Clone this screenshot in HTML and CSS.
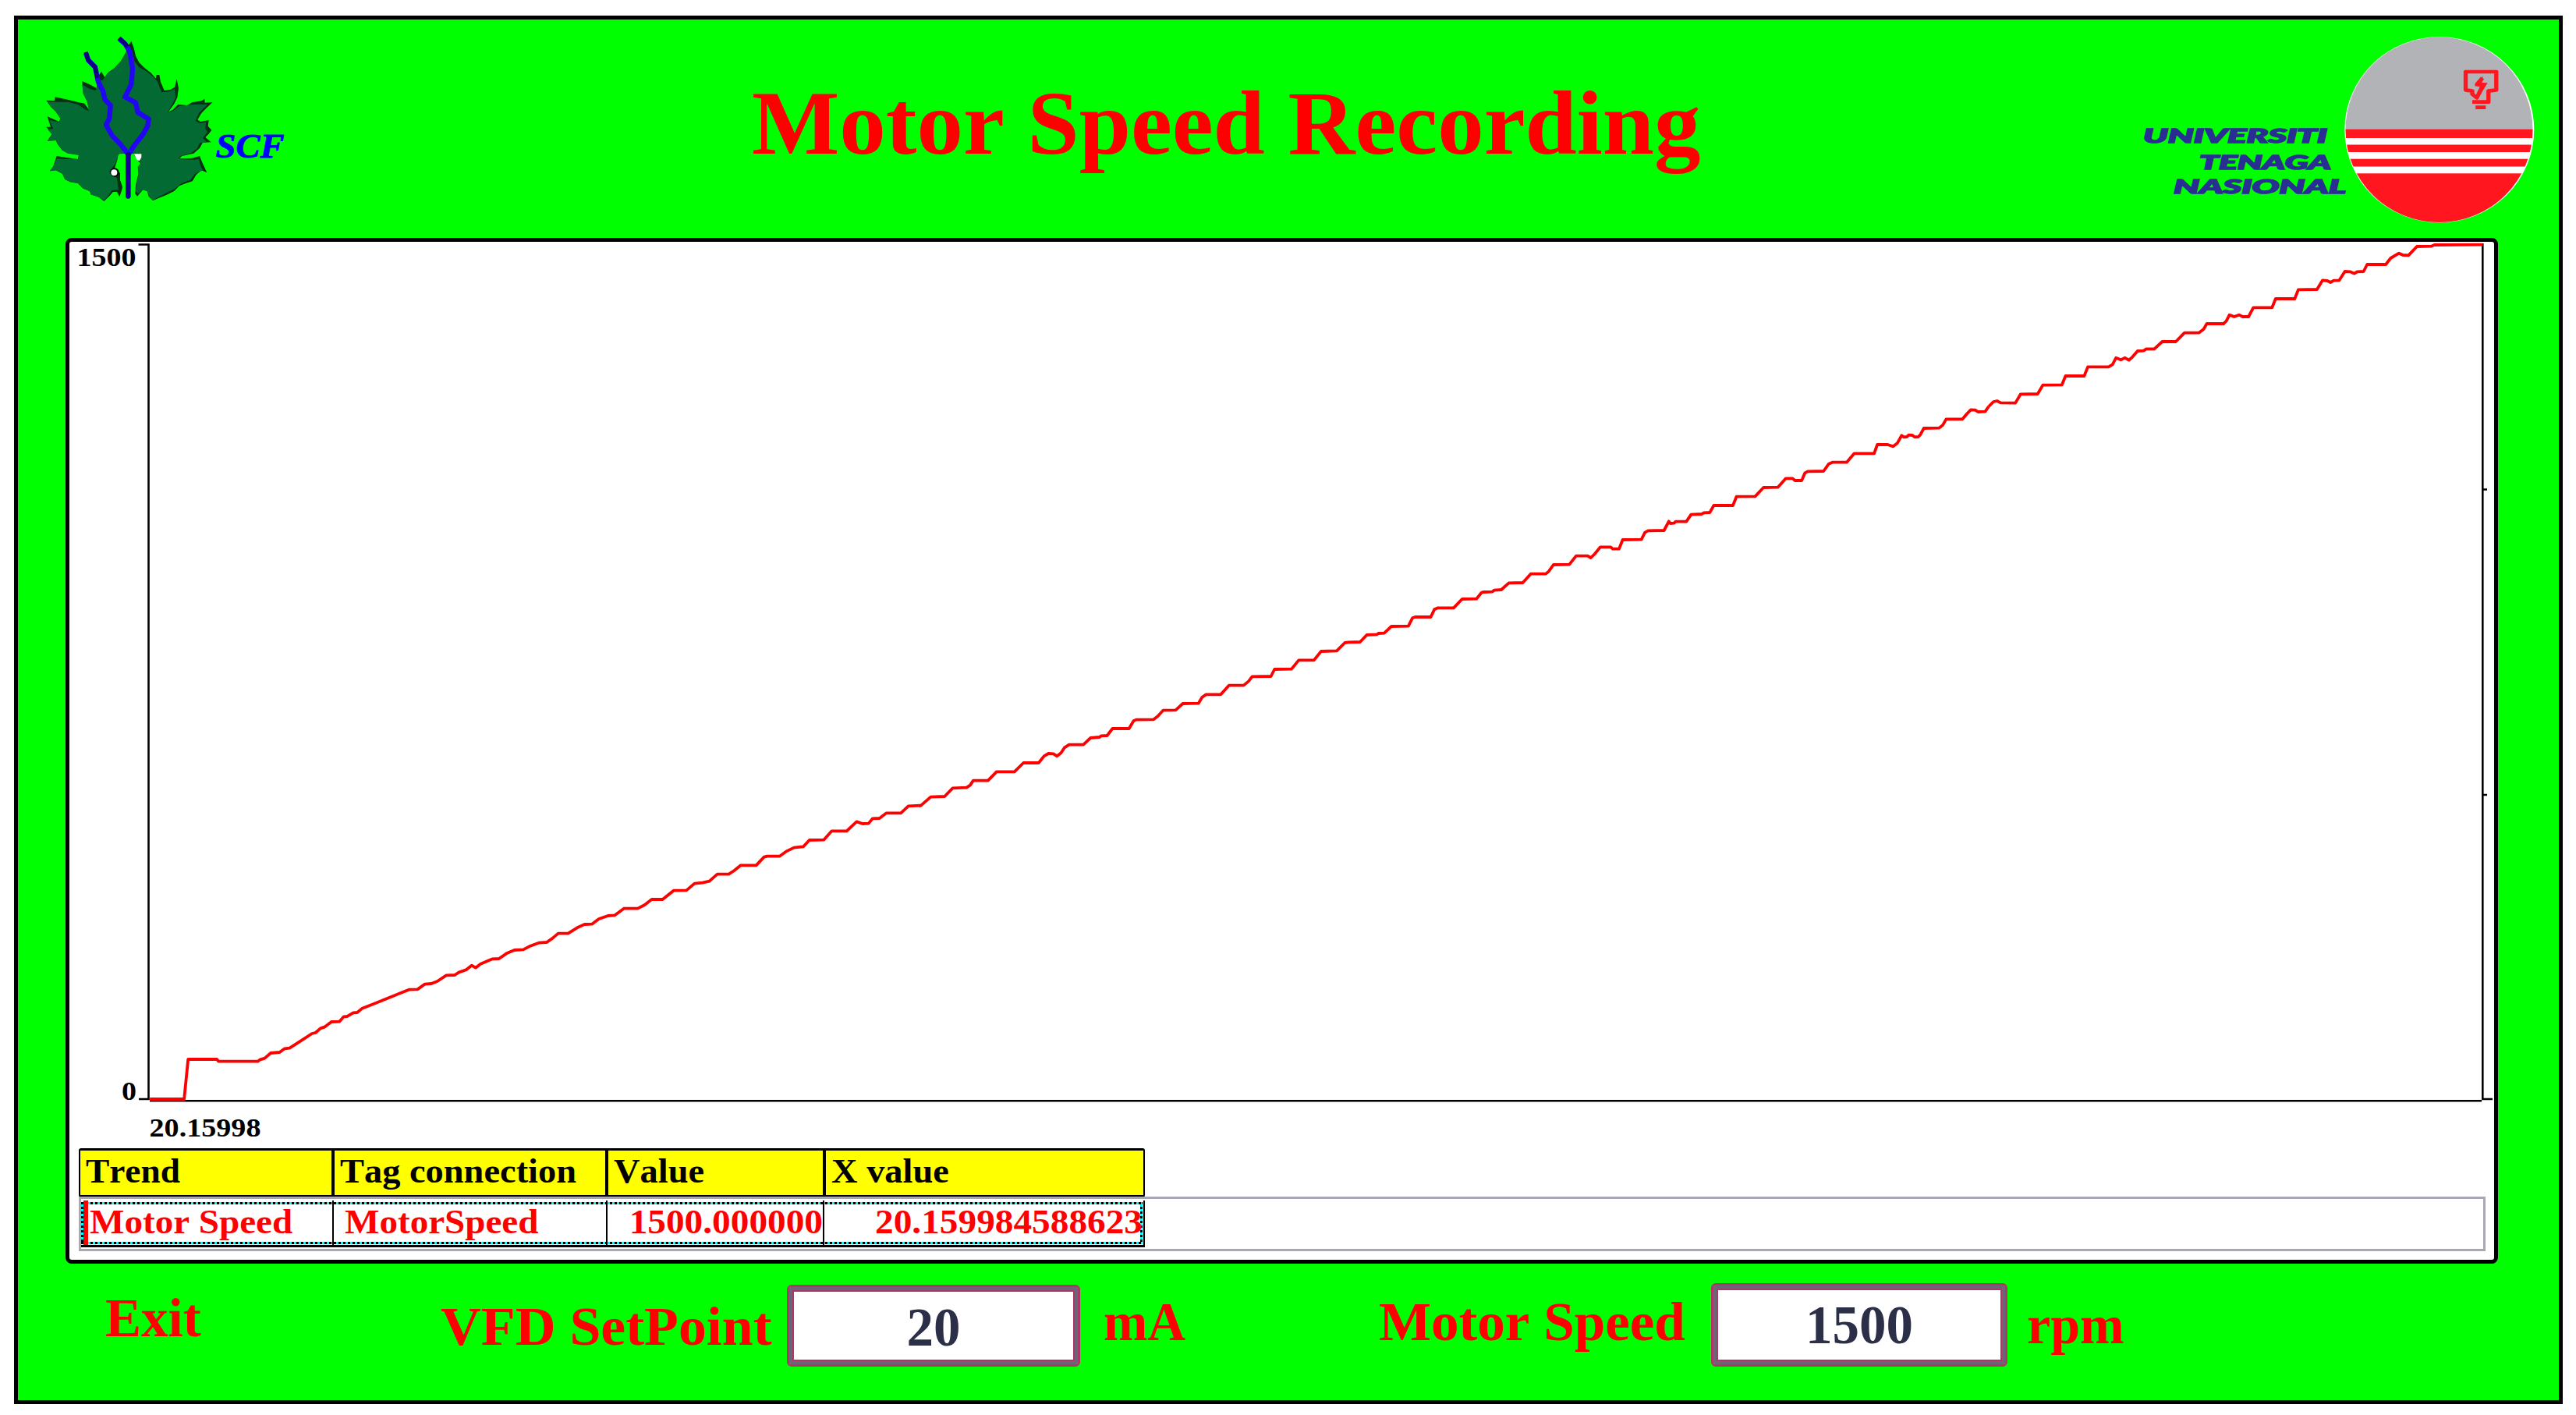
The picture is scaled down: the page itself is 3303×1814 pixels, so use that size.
FILE: index.html
```html
<!DOCTYPE html>
<html lang="en">
<head>
<meta charset="utf-8">
<title>Motor Speed Recording</title>
<link rel="stylesheet" href="styles.css">
</head>
<body>
<main class="screen">
  <header class="header">
    <svg class="logo-scf" viewBox="23 25 344 280" role="img" aria-label="SCF">
      <g transform="scale(.33333)">
        <path id="leaf-shadow" class="leaf-shadow" d="M505 158L515 185 522 215 535 240 555 260 580 280 600 302 602 288 613 288 618 315 632 348 655 345 672 335 680 304 687 340 682 375 670 400 648 430 665 422 685 402 720 405 740 393 775 388 787 380 788 395 818 393 795 415 775 435 760 460 770 468 803 462 800 485 814 500 803 515 790 528 812 547 780 548 768 570 745 590 700 600 690 610 740 608 768 600 778 625 796 664 775 655 755 672 740 697 715 705 690 715 670 735 640 750 610 762 588 772 572 755 566 735 550 730 528 755 520 745 522 710 532 670 530 640 540 630 520 602 505 590 470 592 455 595 450 620 440 650 462 665 462 690 472 720 460 757 450 738 435 738 420 755 400 774 380 758 350 748 345 735 320 725 300 705 270 700 250 690 240 668 215 655 192 658 205 640 218 600 250 605 300 612 303 595 260 588 240 578 222 555 215 540 182 542 200 515 178 488 195 488 182 448 228 468 232 455 215 430 195 410 178 386 210 387 212 373 250 381 280 388 300 393 325 398 345 425 335 390 320 360 316 312 345 325 372 340 380 290 390 275 403 298 415 280 440 262 465 235 485 200 490 180Z"/>
        <path class="leaf" d="M492 190L510 200 516 235 535 258 560 272 585 292 605 312 622 355 655 352 672 342 676 375 660 405 645 432 668 425 690 408 745 402 798 402 765 435 752 465 770 474 792 470 790 495 798 508 780 530 795 546 768 550 758 572 735 588 690 602 688 612 745 614 765 612 772 640 780 655 750 668 732 692 700 704 672 726 640 742 606 760 588 770 574 755 566 735 550 730 530 745 522 735 524 705 534 670 532 640 542 628 525 600 500 590 456 592 444 630 420 660 450 685 456 730 430 732 415 755 400 770 380 758 350 748 345 735 320 725 300 705 270 700 250 690 240 668 215 655 192 658 205 640 220 610 250 612 303 612 303 597 260 590 240 578 222 555 215 540 184 541 200 518 184 498 205 495 190 462 228 470 232 455 215 430 195 410 182 392 215 392 260 392 300 402 330 422 342 427 335 390 320 360 316 325 345 342 368 348 378 310 395 308 415 280 440 262 465 235 485 200Z"/>
        <path class="leaf-gap" d="M458 592L482 592 482 757 473 757 470 715 462 690 466 668 453 630ZM502 592L515 592 526 615 540 628 527 645 531 670 520 710 518 757 502 757Z"/>
        <path class="vein vein-thick" d="M330 203L340 232 366 258 378 315 396 350 404 384 425 405 421 455 408 480 430 520 462 553 494 594 520 555 548 520 568 485 572 458 530 432 522 395 481 373 505 325 510 265 500 200 482 170 458 148"/>
        <path class="vein vein-tip" d="M330 200L340 232 366 258 374 300M458 146L480 166 490 180"/>
        <path class="vein vein-stem" d="M493 594V754"/>
        <circle cx="441" cy="663" r="17" fill="#000"/>
        <circle cx="439" cy="664" r="12" fill="#fff"/>
        <path d="M516 592H544V605L536 619 526 614Z" fill="#fff"/>
      </g>
      <text class="scf-text" x="276.5" y="201.5" textLength="88" lengthAdjust="spacingAndGlyphs">SCF</text>
    </svg>

    <h1 class="title">Motor Speed Recording</h1>

    <svg class="logo-uni" viewBox="2740 25 541 280" role="img" aria-label="Universiti Tenaga Nasional">
      <defs>
        <clipPath id="disc"><ellipse cx="3127.5" cy="166.3" rx="120" ry="118.7"/></clipPath>
      </defs>
      <ellipse cx="3127.8" cy="166.3" rx="121.5" ry="119" fill="#fff"/>
      <g clip-path="url(#disc)">
        <rect x="3000" y="40" width="260" height="125.5" fill="#b2b3b7"/>
        <g fill="#ff161f">
          <rect x="3000" y="165.5" width="260" height="11.5"/>
          <rect x="3000" y="185.5" width="260" height="9.5"/>
          <rect x="3000" y="203.7" width="260" height="9.8"/>
          <rect x="3000" y="222.3" width="260" height="70"/>
        </g>
      </g>
      <g transform="translate(2700 0) scale(.38462 .33333)">
        <path class="bulb" d="M1222 392H1276V350L1302 346V276H1200V346L1222 350V362L1237 376 1258 326 1238 324 1256 300M1233 413H1267"/>
        <path fill="#ff161f" d="M1258 293L1229 330 1248 334 1236 372 1244 374 1273 319 1254 318Z"/>
      </g>
      <g class="uni-text">
        <text x="2748" y="183" textLength="236" lengthAdjust="spacingAndGlyphs">UNIVERSITI</text>
        <text x="2820" y="217" textLength="169" lengthAdjust="spacingAndGlyphs">TENAGA</text>
        <text x="2787" y="248.3" textLength="221" lengthAdjust="spacingAndGlyphs">NASIONAL</text>
      </g>
    </svg>
  </header>

  <section class="panel">
    <svg class="chart" viewBox="89 310 3109 1162">
      <path class="axis" d="M177.5 313.5H190.5V1409H178M192 1411.2H3182M3183.3 312V1409H3196M3183.5 627.5H3189M3183.5 1019H3189"/>
      <g class="trend">
        <polyline transform="translate(180 900) scale(.63776 .33333)" points="19,1527 88,1527 96,1374 154,1374 157,1382 236,1382 240,1376 250,1370 262,1350 280,1347 290,1333 300,1331 325,1300 345,1275 352,1272 362,1255 370,1250 384,1230 400,1229 409,1210 416,1209 428,1195 436,1194 446,1178 470,1160 500,1137 540,1106 557,1105 572,1085 585,1083 597,1074 615,1051 632,1050 640,1040 655,1030 666,1013 674,1022 684,1007 708,988 721,987 736,967 752,954 770,952 784,938 801,926 817,924 829,908 840,890 860,890 880,866 893,855 908,854 922,834 940,822 954,820 972,794 1000,794 1014,780 1028,759 1050,759 1072,725 1098,724 1114,698 1130,695 1144,689 1160,662 1183,662 1194,648 1207,628 1238,628 1254,596 1260,593 1285,593 1298,575 1314,560 1333,556 1345,531 1374,530 1390,496 1420,496 1440,460 1452,468 1464,467 1472,448 1486,447 1500,427 1529,427 1544,400 1568,398"/>
        <polyline transform="translate(1000 640) scale(.57398 .33333)" points="311,1180 315,1178 337,1145 368,1143 386,1111 417,1109 425,1100 432,1082 465,1082 484,1048 524,1048 544,1014 578,1014 590,988 600,978 611,979 619,988 628,976 636,955 646,944 678,944 694,918 714,915 718,910 731,909 743,882 780,882 790,853 796,848 835,847 844,835 856,812 884,811 900,786 935,785 943,762 952,751 985,751 1003,716 1036,716 1047,700 1055,682 1097,681 1105,654 1143,653 1159,619 1193,619 1209,585 1244,583 1262,552 1270,550 1296,549 1311,522 1334,520 1337,516 1350,515 1366,489 1404,488 1413,457 1419,453 1454,453 1462,424 1470,418 1505,418 1524,384 1556,383 1568,358"/>
        <polyline transform="translate(1750 420) scale(.5102 .33333)" points="293,1019 298,1017 320,1016 325,1010 343,1008 362,982 397,981 417,947 455,947 462,938 474,912 514,911 531,878 560,878 568,885 578,870 592,844 618,844 623,851 639,851 648,816 695,815 704,788 712,781 752,780 764,745 768,753 777,752 781,746 808,746 820,719 847,717 852,712 867,711 877,684 925,684 934,650 981,649 1002,615 1038,614 1058,580 1075,580 1081,588 1098,588 1106,559 1113,553 1153,552 1166,524 1175,518 1211,518 1230,484 1280,484 1288,450 1314,450 1328,457 1338,445 1349,415 1355,421 1362,420 1367,413 1376,414 1382,421 1391,420 1396,412 1405,387 1443,386 1452,376 1461,352 1502,352 1514,330 1523,316 1534,317 1541,324 1559,323 1568,303"/>
        <polyline transform="translate(2450 290) scale(.5102 .33333)" points="196,693 208,675 217,672 226,679 263,680 276,646 319,645 332,611 380,610 389,576 436,576 445,541 497,541 507,532 516,506 528,514 538,506 548,515 556,505 570,480 585,479 592,472 612,472 632,444 666,444 688,410 724,410 736,396 744,375 786,375 793,365 801,341 813,348 825,341 834,348 849,348 861,313 908,313 917,279 965,279 974,244 1021,243 1035,208 1047,210 1055,216 1063,209 1077,208 1091,174 1104,175 1115,182 1122,175 1138,174 1147,147 1194,147 1206,123 1227,104 1237,111 1251,112 1272,78 1308,77 1316,72 1437,71"/>
      </g>
      <g class="axis-label">
        <text x="98.5" y="340.5" textLength="76" lengthAdjust="spacingAndGlyphs">1500</text>
        <text x="156" y="1410" textLength="19" lengthAdjust="spacingAndGlyphs">0</text>
        <text x="191.5" y="1456.5" textLength="143" lengthAdjust="spacingAndGlyphs">20.15998</text>
      </g>
    </svg>

    <div class="table">
      <div class="thead">
        <div class="th"><span class="th-trend">Trend</span></div>
        <div class="th"><span>Tag connection</span></div>
        <div class="th"><span>Value</span></div>
        <div class="th"><span>X value</span></div>
      </div>
      <div class="tbody">
        <div class="row">
          <div class="td td-name"><span>Motor Speed</span></div>
          <div class="td td-tag"><span>MotorSpeed</span></div>
          <div class="td td-num"><span>1500.000000</span></div>
          <div class="td td-num td-x"><span>20.159984588623</span></div>
        </div>
      </div>
    </div>
  </section>

  <footer class="footer">
    <div class="label exit">Exit</div>
    <div class="label setpoint">VFD SetPoint</div>
    <div class="field field-setpoint"><span>20</span></div>
    <div class="label unit-ma">mA</div>
    <div class="label speed">Motor Speed</div>
    <div class="field field-speed"><span>1500</span></div>
    <div class="label unit-rpm">rpm</div>
  </footer>
</main>
</body>
</html>
```

FILE: styles.css
```css
* {
  box-sizing: border-box;
}

body {
  margin: 0;
  padding: 20px 17px 14px 18px;
  background: #fff;
  font-family: "Liberation Serif", "Times New Roman", serif;
  font-weight: bold;
  font-kerning: none;
}

.screen {
  height: 1780px;
  border: 5px solid #000;
  background: #0f0;
}

/* header */
.header {
  display: flex;
  height: 280px;
}

.logo-scf {
  width: 344px;
  height: 280px;
  flex: none;
}

.leaf-shadow {
  fill: #06300f;
}

.leaf {
  fill: #046a34;
}

.leaf-gap {
  fill: #0f0;
}

.vein {
  fill: none;
  stroke: #2205f2;
  stroke-width: 19;
  stroke-linejoin: round;
}

.vein-tip {
  stroke: #10007a;
  stroke-width: 15;
}

.vein-stem {
  stroke: #17008e;
  stroke-width: 20;
  stroke-linecap: round;
}

.scf-text {
  font-size: 44px;
  font-style: italic;
  fill: #00f;
  stroke: #00f;
  stroke-width: 0.8px;
}

.title {
  margin: 75px 0 0 597px;
  font-size: 116px;
  line-height: 1;
  white-space: nowrap;
  color: #f00;
  transform: scaleX(1.026);
  transform-origin: left;
}

.logo-uni {
  width: 541px;
  height: 280px;
  margin-left: auto;
  flex: none;
}

.bulb {
  fill: none;
  stroke: #ff161f;
  stroke-width: 14;
  stroke-linejoin: round;
}

.uni-text {
  font-family: Lato, sans-serif;
  font-size: 25px;
  font-weight: 900;
  font-style: italic;
  fill: #292e92;
  stroke: #292e92;
  stroke-width: 1.6px;
}

/* trend panel */
.panel {
  width: 3119px;
  height: 1315px;
  margin-left: 61px;
  border: 5px solid #000;
  border-radius: 8px;
  background: #fff;
}

.chart {
  display: block;
  width: 3109px;
  height: 1162px;
}

.axis {
  fill: none;
  stroke: #000;
  stroke-width: 2.6;
}

.trend polyline {
  fill: none;
  stroke: #f00;
  stroke-width: 3.8;
  stroke-linejoin: round;
  vector-effect: non-scaling-stroke;
}

.axis-label {
  font-size: 34px;
  fill: #000;
}

/* value table */
.table {
  margin-left: 12px;
  font-size: 44px;
  line-height: 1;
  white-space: nowrap;
}

.thead {
  display: grid;
  grid-template-columns: 326px 351px 279px 1fr;
  width: 1367px;
  height: 63px;
  border: 2px solid #000;
  border-width: 3px 2px 3px 2px;
  border-radius: 3px;
  background: #ff0;
}

.th {
  padding: 5px 0 0 7px;
  border-right: 4px solid #000;
}

.th:last-child {
  border-right: 0;
}

.th span,
.td span {
  display: inline-block;
  transform: scaleX(1.055);
  transform-origin: left;
}

.th .th-trend {
  transform: scaleX(1.03);
}

.tbody {
  width: 3086px;
  height: 70px;
  margin-top: -1px;
  padding: 2px 0;
  border: 3px solid #a9a8b2;
}

.row {
  display: grid;
  grid-template-columns: 324px 351px 278px 1fr;
  width: 1364px;
  height: 60px;
  border-right: 2px solid #000;
  border-bottom: 3px solid #000;
  color: #f00;
  background:
    linear-gradient(#f00, #f00) 3px 0 / 6px 58px no-repeat,
    repeating-linear-gradient(90deg, #000 0 3px, #0ff 3px 6px) 0 2px / 1360px 3px no-repeat,
    repeating-linear-gradient(90deg, #000 0 3px, #0ff 3px 6px) 0 53px / 1360px 3px no-repeat,
    repeating-linear-gradient(#000 0 3px, #0ff 3px 6px) 0 2px / 3px 54px no-repeat,
    repeating-linear-gradient(#000 0 3px, #0ff 3px 6px) 1358px 2px / 3px 54px no-repeat;
}

.td {
  padding-top: 6px;
  border-right: 2px solid #000;
}

.td:last-child {
  border-right: 0;
}

.td span {
  transform: scaleX(1.07);
}

.td-name {
  padding-left: 11px;
}

.td-tag {
  padding-left: 14px;
}

.td-num {
  text-align: right;
}

.td-num span {
  transform: scaleX(1.075);
  transform-origin: right;
}

.td-x {
  padding-right: 1px;
}

/* footer */
.footer {
  display: grid;
  grid-template-columns: 430px 444px 406px 353px 426px 405px 1fr;
  align-items: start;
  padding-left: 112px;
  font-size: 69px;
  line-height: 1;
  white-space: nowrap;
  color: #f00;
}

.label {
  transform-origin: left;
}

.exit {
  padding-top: 36px;
}

.setpoint {
  padding-top: 47px;
  transform: scaleX(1.04);
}

.unit-ma {
  padding-top: 41px;
  transform: scaleX(0.98);
}

.speed {
  padding-top: 41px;
  transform: scaleX(1.03);
}

.unit-rpm {
  padding-top: 45px;
  transform: scaleX(0.985);
}

.field {
  display: flex;
  justify-content: center;
  border: 3px solid #ad3766;
  border-radius: 6px;
  background: #fff;
  box-shadow: inset 0 0 0 4px #6a6577, inset 0 0 0 6px #ad3766;
  color: #2b2f48;
}

.field-setpoint {
  width: 376px;
  height: 105px;
  margin-top: 27px;
  padding-top: 18px;
}

.field-speed {
  width: 380px;
  height: 107px;
  margin-top: 25px;
  padding-top: 17px;
}
```
